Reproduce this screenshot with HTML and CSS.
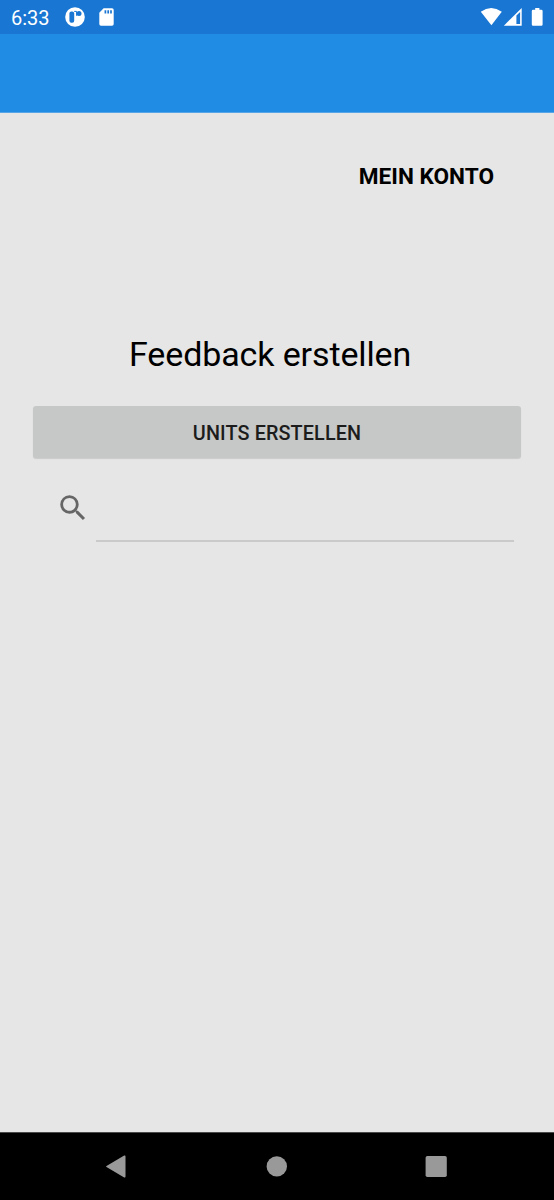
FILE: index.html
```html
<!DOCTYPE html>
<html lang="de">
<head>
<meta charset="utf-8">
<title>Feedback erstellen</title>
<link rel="stylesheet" href="styles.css">
</head>
<body>
<div class="screen">
  <header class="status">
    <span class="clock">6:33</span>
    <svg class="notifications" width="52" height="34" viewBox="0 0 52 34">
      <circle cx="10" cy="17" r="9.8" fill="#fff"/>
      <rect x="4.4" y="11.4" width="4.8" height="11.4" rx="2" fill="#1976d2"/>
      <path d="M9.2 11.4h2.4v4.4" fill="none" stroke="#1976d2" stroke-width="1"/>
      <circle cx="14" cy="13.6" r="2.5" fill="#1976d2"/>
      <path d="M38.6 8.3H47a1.7 1.7 0 0 1 1.7 1.7v14a1.7 1.7 0 0 1-1.7 1.7H36a1.7 1.7 0 0 1-1.7-1.7V12.7z" fill="#fff"/>
      <path d="M40.4 10.2v3.4M43.2 10.2v3.4M46 10.2v3.4" stroke="#1976d2" stroke-width="1.7"/>
    </svg>
    <svg class="signals" width="64" height="34" viewBox="0 0 64 34">
      <path d="M.8 11.7Q11.2 4.5 21.8 11.7L11.4 25.3z" fill="#fff"/>
      <path d="M41.7 8v17.7H23.8z" fill="#fff"/>
      <path d="M36.4 15.6l3.7-3.6v12h-3.7z" fill="#1976d2"/>
      <path d="M55.2 8h4.2v1.7h1.9q1.3 0 1.3 1.3v13.4q0 1.3-1.3 1.3h-8.2q-1.3 0-1.3-1.3V11q0-1.3 1.3-1.3h2.1z" fill="#fff"/>
    </svg>
  </header>
  <div class="toolbar"></div>
  <main class="content">
    <a class="account">MEIN KONTO</a>
    <h1 class="title">Feedback erstellen</h1>
    <button class="create">UNITS ERSTELLEN</button>
    <div class="search">
      <svg class="search-icon" width="34" height="34" viewBox="0 0 24 24"><path fill="#666" d="M15.5 14h-.79l-.28-.27A6.47 6.47 0 0 0 16 9.5 6.5 6.5 0 1 0 9.5 16c1.61 0 3.09-.59 4.23-1.57l.27.28v.79l5 4.99L20.49 19l-4.99-5zm-6 0C7.01 14 5 11.99 5 9.5S7.01 5 9.5 5 14 7.01 14 9.5 11.99 14 9.5 14z"/></svg>
      <div class="field"></div>
    </div>
  </main>
  <nav class="navbar">
    <svg width="22" height="24" viewBox="0 0 22 24"><path d="M1.5 10.9 19.2.6q1.3-.6 1.3.8v20.2q0 1.4-1.3.8L1.5 12.1q-1-.6 0-1.2z" fill="#999"/></svg>
    <svg width="22" height="24" viewBox="0 0 22 24"><circle cx="11.8" cy="11.4" r="10.2" fill="#999"/></svg>
    <svg width="22" height="24" viewBox="0 0 22 24"><rect x=".6" y="1" width="21.2" height="21" rx="1.8" fill="#999"/></svg>
  </nav>
</div>
</body>
</html>
```
FILE: styles.css
```css
body {
  margin: 0;
  font-family: Roboto, sans-serif;
}
.screen {
  display: flex;
  flex-direction: column;
  width: 554px;
  height: 1200px;
  overflow: hidden;
  background: #e6e6e6;
}
.status {
  display: flex;
  align-items: center;
  box-sizing: border-box;
  height: 34px;
  padding: 0 10px 0 11px;
  background: #1976d2;
  color: #fff;
}
.clock {
  width: 54px;
  font-size: 20px;
  line-height: 34px;
  padding-top: 1px;
}
.signals {
  margin-left: auto;
}
.toolbar {
  box-sizing: border-box;
  height: 79px;
  background: #208ce3;
  border-bottom: 1px solid #57a5e4;
}
.content {
  display: flex;
  flex: 1;
  flex-direction: column;
}
.account {
  align-self: flex-end;
  margin: 49px 60px 0 0;
  font-size: 22.6px;
  font-weight: 700;
  line-height: 30px;
  color: #000;
}
.title {
  margin: 142px 0 0 129px;
  font-size: 34px;
  font-weight: 400;
  line-height: 40px;
  letter-spacing: -0.12px;
  white-space: nowrap;
  color: #000;
}
.create {
  height: 52px;
  margin: 32px 33px 0;
  padding: 4px 0 0;
  border: 0;
  border-radius: 3px;
  background: #c6c8c7;
  box-shadow: 0 1px 1px rgba(0, 0, 0, 0.12);
  font: 500 19.8px/48px Roboto, sans-serif;
  letter-spacing: 0.12px;
  color: #1c1c1c;
}
.search {
  display: flex;
  height: 51px;
  margin: 33px 40px 0 56px;
  gap: 6px;
}
.field {
  flex: 1;
  box-sizing: border-box;
  border-bottom: 2px solid #cacaca;
}
.navbar {
  display: flex;
  justify-content: space-between;
  align-items: center;
  box-sizing: border-box;
  height: 68px;
  padding: 0 107px 0 105px;
  border-top: 1px solid #4a4a4a;
  background: #000;
}
```
